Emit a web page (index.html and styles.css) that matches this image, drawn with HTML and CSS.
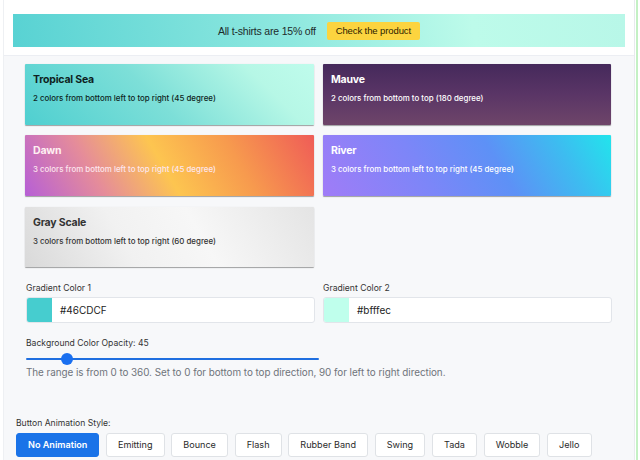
FILE: index.html
```html
<!DOCTYPE html>
<html>
<head>
<meta charset="utf-8">
<link rel="stylesheet" href="styles.css">
</head>
<body>
<div class="frame">
  <div class="page">
    <div class="topcard">
      <div class="banner">
        <span class="banner-text">All t-shirts are 15% off</span>
        <span class="banner-btn">Check the product</span>
      </div>
    </div>
    <div class="panel">
      <div class="cards">
        <div class="card tropical">
          <div class="card-title">Tropical Sea</div>
          <div class="card-desc">2 colors from bottom left to top right (45 degree)</div>
        </div>
        <div class="card mauve">
          <div class="card-title">Mauve</div>
          <div class="card-desc">2 colors from bottom to top (180 degree)</div>
        </div>
        <div class="card dawn">
          <div class="card-title">Dawn</div>
          <div class="card-desc">3 colors from bottom left to top right (45 degree)</div>
        </div>
        <div class="card river">
          <div class="card-title">River</div>
          <div class="card-desc">3 colors from bottom left to top right (45 degree)</div>
        </div>
        <div class="card gray">
          <div class="card-title">Gray Scale</div>
          <div class="card-desc">3 colors from bottom left to top right (60 degree)</div>
        </div>
      </div>

      <div class="colors">
        <div class="field">
          <div class="label">Gradient Color 1</div>
          <div class="color-input">
            <span class="swatch sw1"></span>
            <span class="hex">#46CDCF</span>
          </div>
        </div>
        <div class="field">
          <div class="label">Gradient Color 2</div>
          <div class="color-input">
            <span class="swatch sw2"></span>
            <span class="hex">#bfffec</span>
          </div>
        </div>
      </div>

      <div class="opacity">
        <div class="label">Background Color Opacity: 45</div>
        <div class="slider">
          <div class="track"><span class="thumb"></span></div>
        </div>
        <div class="hint">The range is from 0 to 360. Set to 0 for bottom to top direction, 90 for left to right direction.</div>
      </div>

      <div class="anim">
        <div class="label">Button Animation Style:</div>
        <div class="buttons">
          <span class="btn active">No Animation</span>
          <span class="btn">Emitting</span>
          <span class="btn">Bounce</span>
          <span class="btn">Flash</span>
          <span class="btn">Rubber Band</span>
          <span class="btn">Swing</span>
          <span class="btn">Tada</span>
          <span class="btn">Wobble</span>
          <span class="btn">Jello</span>
        </div>
      </div>
    </div>
  </div>
</div>
</body>
</html>
```
FILE: styles.css
```css
html, body {
  margin: 0;
  padding: 0;
  background: #ffffff;
  font-family: Inter, "Liberation Sans", sans-serif;
  color: #222;
}
.frame {
  width: 636px;
  height: 460px;
  border-right: 2px solid #c4f1c4;
  overflow: hidden;
}
.page {
  margin-left: 3px;
  width: 630px;
  height: 460px;
  border-right: 1px solid #e8eaee;
  border-left: 1px solid #eef0f3;
}
.topcard {
  height: 56px;
  padding: 14px 0 0 9px;
  box-sizing: border-box;
  background: #fff;
  border-bottom: 1px solid #eceef3;
}
.banner {
  width: 612px;
  height: 33px;
  background: linear-gradient(80deg, #58d2d3 0%, #8ee8df 45%, #bdfbea 75%, #b8f7e8 100%);
  display: flex;
  align-items: center;
  justify-content: center;
  gap: 11px;
  font-family: "Liberation Sans", Arial, sans-serif;
}
.banner-text {
  font-size: 10.5px;
  color: #1d2b2b;
  letter-spacing: -0.2px;
}
.banner-btn {
  background: #fcd43f;
  color: #2a2200;
  font-size: 9.5px;
  height: 18px;
  line-height: 18px;
  padding: 0 9px;
  border-radius: 2px;
  letter-spacing: -0.1px;
}
.panel {
  background: #f7f8fa;
  height: 404px;
  padding: 8px 0 0 21px;
  box-sizing: border-box;
}
.cards {
  display: grid;
  grid-template-columns: 289px 288px;
  column-gap: 9px;
  row-gap: 10px;
  grid-auto-rows: 61px;
}
.card {
  padding: 9px 8px 0 8px;
  box-sizing: border-box;
  box-shadow: 0 1px 1px rgba(0,0,0,0.35), 0 0 1px rgba(0,0,0,0.15);
  border-radius: 1px;
}
.card-title {
  font-weight: 700;
  font-size: 10.5px;
  letter-spacing: -0.2px;
  line-height: 14px;
}
.card-desc {
  font-size: 7.9px;
  line-height: 10px;
  margin-top: 6px;
  font-weight: 500;
}
.tropical {
  background: linear-gradient(45deg, #4fcfd0 0%, #7ddfd8 45%, #b6f7e6 80%, #bffcec 100%);
  color: #0e1f22;
}
.mauve {
  background: linear-gradient(to bottom, #45295b 0%, #5a3566 50%, #6e4569 100%);
  color: #ffffff;
}
.dawn {
  background: linear-gradient(60deg, #b65fd6 0%, #e58c9a 25%, #fdc550 48%, #f79a4e 72%, #ef5c57 100%);
  color: #fde6ee;
}
.dawn .card-title { color: #fff0f2; }
.river {
  background: linear-gradient(60deg, #a07cf7 0%, #7c86f8 35%, #5d91f6 60%, #3dbcf0 82%, #22e4ec 100%);
  color: #ffffff;
}
.gray {
  background: linear-gradient(60deg, #d9d9d9 0%, #f1f1f1 35%, #f7f7f7 60%, #e4e4e4 100%);
  color: #333;
  grid-row: 3;
  margin-top: 1px;
}
.label {
  font-size: 8.6px;
  color: #333;
  line-height: 11px;
}
.colors {
  display: grid;
  grid-template-columns: 289px 288px;
  column-gap: 9px;
  margin-top: 16px;
  margin-left: 1px;
}
.field:nth-child(2) { margin-left: -1px; }
.color-input {
  margin-top: 3px;
  height: 26px;
  background: #fff;
  border: 1px solid #e2e5ea;
  border-radius: 3px;
  box-sizing: border-box;
  display: flex;
  align-items: center;
  overflow: hidden;
}
.swatch {
  width: 25px;
  height: 100%;
}
.sw1 { background: #46cdcf; }
.sw2 { background: #bfffec; }
.hex {
  margin-left: 8px;
  font-size: 10px;
  color: #222;
}
.opacity {
  margin-top: 15px;
  margin-left: 1px;
}
.slider {
  width: 293px;
  height: 14px;
  margin-top: 3px;
  display: flex;
  align-items: center;
}
.track {
  width: 100%;
  height: 2.5px;
  background: #1f6fe0;
  border-radius: 2px;
  display: flex;
  align-items: center;
  padding-left: 35px;
  box-sizing: border-box;
}
.thumb {
  width: 12px;
  height: 12px;
  border-radius: 50%;
  background: #1a6ff0;
}
.hint {
  font-size: 9.9px;
  color: #6f747b;
  margin-top: 0;
  line-height: 12px;
  letter-spacing: -0.05px;
}
.anim {
  margin-top: 40px;
  margin-left: -9px;
}
.buttons {
  display: flex;
  gap: 6.4px;
  margin-top: 4px;
}
.btn {
  height: 24px;
  line-height: 22px;
  box-sizing: border-box;
  padding: 0 11.2px;
  border: 1px solid #dfe2e6;
  border-radius: 3px;
  background: #fff;
  font-size: 9.1px;
  color: #2b2b2b;
}
.btn.active {
  background: #1a73e8;
  border-color: #1a73e8;
  color: #fff;
  font-weight: 600;
  padding: 0 11px;
}
```
